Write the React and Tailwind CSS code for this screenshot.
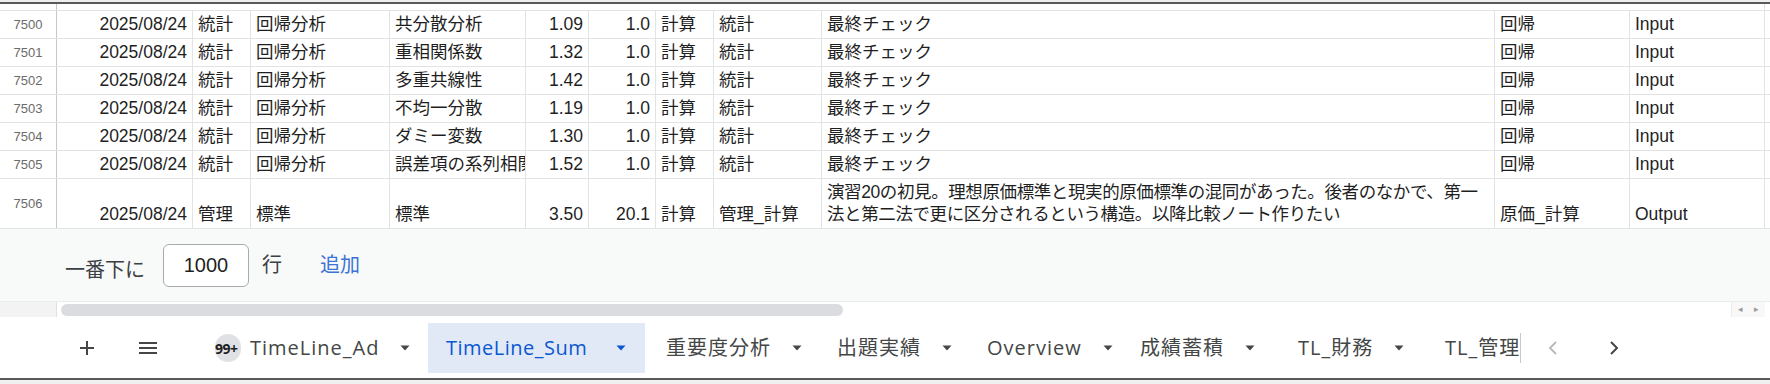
import React from "react";

const COLS = [
  { w: "w-[57px]", a: "justify-center" },
  { w: "w-[136px]", a: "justify-end" },
  { w: "w-[58px]", a: "justify-start" },
  { w: "w-[139px]", a: "justify-start" },
  { w: "w-[136px]", a: "justify-start" },
  { w: "w-[63px]", a: "justify-end" },
  { w: "w-[67px]", a: "justify-end" },
  { w: "w-[58px]", a: "justify-start" },
  { w: "w-[108px]", a: "justify-start" },
  { w: "w-[673px]", a: "justify-start" },
  { w: "w-[135px]", a: "justify-start" },
  { w: "w-[135px]", a: "justify-start" },
];

const ROWS = [
  ["7500", "2025/08/24", "統計", "回帰分析", "共分散分析", "1.09", "1.0", "計算", "統計", "最終チェック", "回帰", "Input"],
  ["7501", "2025/08/24", "統計", "回帰分析", "重相関係数", "1.32", "1.0", "計算", "統計", "最終チェック", "回帰", "Input"],
  ["7502", "2025/08/24", "統計", "回帰分析", "多重共線性", "1.42", "1.0", "計算", "統計", "最終チェック", "回帰", "Input"],
  ["7503", "2025/08/24", "統計", "回帰分析", "不均一分散", "1.19", "1.0", "計算", "統計", "最終チェック", "回帰", "Input"],
  ["7504", "2025/08/24", "統計", "回帰分析", "ダミー変数", "1.30", "1.0", "計算", "統計", "最終チェック", "回帰", "Input"],
  ["7505", "2025/08/24", "統計", "回帰分析", "誤差項の系列相関", "1.52", "1.0", "計算", "統計", "最終チェック", "回帰", "Input"],
];

function Row({ data, tall }) {
  return (
    <div className={`flex border-b border-[#e2e3e3] ${tall ? "h-[50px]" : "h-[28px]"}`}>
      {COLS.map((c, i) => (
        <div
          key={i}
          className={`${c.w} shrink-0 flex ${c.a} ${
            i === 0
              ? "items-center border-r border-[#c7c7c7] text-[13px] text-[#6b6b6b]"
              : "items-end pb-[3px] border-r border-[#e2e3e3] text-[17.5px] text-[#1f1f1f] px-[5px]"
          } overflow-hidden whitespace-nowrap leading-[22px]`}
        >
          {data[i]}
        </div>
      ))}
      <div className="flex-1" />
    </div>
  );
}

function Caret({ blue, className = "ml-[21px]" }) {
  return (
    <svg width="10" height="6" viewBox="0 0 10 6" className={`shrink-0 ${className}`}>
      <path d="M0.5 0.5 L9.5 0.5 L5 5.5 Z" fill={blue ? "#0b57d0" : "#444746"} />
    </svg>
  );
}

function Tab({ label, w }) {
  return (
    <div className={`h-[50px] flex items-center shrink-0 text-[#444746] ${w}`}>
      <span className="text-[20px] tracking-[1px] whitespace-nowrap">{label}</span>
      <Caret />
    </div>
  );
}

export default function App() {
  const tall = [
    "7506",
    "2025/08/24",
    "管理",
    "標準",
    "標準",
    "3.50",
    "20.1",
    "計算",
    "管理_計算",
    <div key="d" className="flex flex-col leading-[22px] tracking-[-0.4px]">
      <span>演習20の初見。理想原価標準と現実的原価標準の混同があった。後者のなかで、第一</span>
      <span>法と第二法で更に区分されるという構造。以降比較ノート作りたい</span>
    </div>,
    "原価_計算",
    "Output",
  ];

  return (
    <div
      className="w-[1770px] h-[384px] bg-white overflow-hidden flex flex-col"
      style={{ fontFamily: '"Liberation Sans", "Noto Sans CJK JP", sans-serif' }}
    >
      {/* window top frame */}
      <div className="h-[2px] bg-[#eeeeee] shrink-0" />
      <div className="h-[2px] bg-[#5a5a5a] shrink-0" />
      <div className="h-[7px] border-b border-[#e2e3e3] shrink-0 flex">
        <div className="w-[57px] border-r border-[#c7c7c7]" />
        <div className="w-[1708px] border-r border-[#e2e3e3]" />
      </div>

      {ROWS.map((r) => (
        <Row key={r[0]} data={r} />
      ))}
      <Row data={tall} tall />

      {/* add rows area */}
      <div className="h-[72px] bg-[#f8f9f9] shrink-0 flex items-center pl-[65px] text-[20px] text-[#3c4043]">
        <span className="mt-[10px]">一番下に</span>
        <div className="ml-[18px] w-[86px] h-[43px] rounded-[6px] border border-[#a8abad] bg-white flex items-center justify-center text-[20px] text-[#1f1f1f]">
          1000
        </div>
        <span className="ml-[13px]">行</span>
        <span className="ml-[38px] text-[#3b73d6]">追加</span>
      </div>

      {/* scrollbar */}
      <div className="h-[16px] shrink-0 flex border-t border-[#ececec] bg-white">
        <div className="w-[57px] bg-[#f3f3f3] border-r border-[#e0e0e0]" />
        <div className="flex-1 flex items-center pl-[4px]">
          <div className="w-[782px] h-[12px] rounded-full bg-[#dadcdf]" />
        </div>
        <div className="w-[34px] flex items-center justify-around text-[9px] text-[#9a9a9a] border-l border-[#ececec] bg-[#f8f8f8]">
          <span>◂</span>
          <span>▸</span>
        </div>
        <div className="w-[5px]" />
      </div>

      {/* tabs bar */}
      <div
        className="h-[61px] pt-[1px] shrink-0 flex items-center bg-white"
        style={{ fontFamily: '"Open Sans", "Noto Sans CJK JP", sans-serif' }}
      >
        <svg width="18" height="18" viewBox="0 0 18 18" className="ml-[78px] shrink-0">
          <path d="M9 2 V16 M2 9 H16" stroke="#444746" strokeWidth="2" />
        </svg>
        <svg width="20" height="16" viewBox="0 0 20 16" className="ml-[42px] shrink-0">
          <path d="M1 3 H19 M1 8 H19 M1 13 H19" stroke="#444746" strokeWidth="2" />
        </svg>
        <div className="ml-[57px] relative w-[30px] h-[28px] flex items-center shrink-0">
          <div className="absolute left-0 top-0 w-[26px] h-[28px] rounded-full bg-[#dfe1e5]" />
          <span className="relative text-[14px] font-bold text-[#1f1f1f] tracking-[-0.5px]">99+</span>
        </div>
        <div className="ml-[5px] flex">
          <Tab label="TimeLine_Ad" w="w-[178px]" />
          <div className="w-[217px] h-[50px] shrink-0 bg-[#e1e9f7] flex items-center justify-between pl-[18px] pr-[19px] text-[#0b57d0] font-medium">
            <span className="text-[20px] tracking-[0.5px] whitespace-nowrap">TimeLine_Sum</span>
            <Caret blue className="" />
          </div>
          <div className="w-[21px] shrink-0" />
          <Tab label="重要度分析" w="w-[171px]" />
          <Tab label="出題実績" w="w-[150px]" />
          <Tab label="Overview" w="w-[153px]" />
          <Tab label="成績蓄積" w="w-[158px]" />
          <Tab label="TL_財務" w="w-[147px]" />
          <div className="flex items-center shrink-0">
            <span className="text-[20px] text-[#444746] tracking-[1px] whitespace-nowrap">TL_管理</span>
            <div className="w-[1px] h-[30px] bg-[#c8c8c8]" />
          </div>
        </div>
        <svg width="10" height="16" viewBox="0 0 10 16" className="ml-[27px] shrink-0">
          <path d="M8 2 L2 8 L8 14" stroke="#b8b8b8" strokeWidth="1.8" fill="none" />
        </svg>
        <svg width="10" height="16" viewBox="0 0 10 16" className="ml-[51px] shrink-0">
          <path d="M2 2 L8 8 L2 14" stroke="#444746" strokeWidth="2" fill="none" />
        </svg>
      </div>
      <div className="h-[2px] bg-[#5a5a5a] shrink-0" />
      <div className="flex-1 bg-[#f0f0f0]" />
    </div>
  );
}
